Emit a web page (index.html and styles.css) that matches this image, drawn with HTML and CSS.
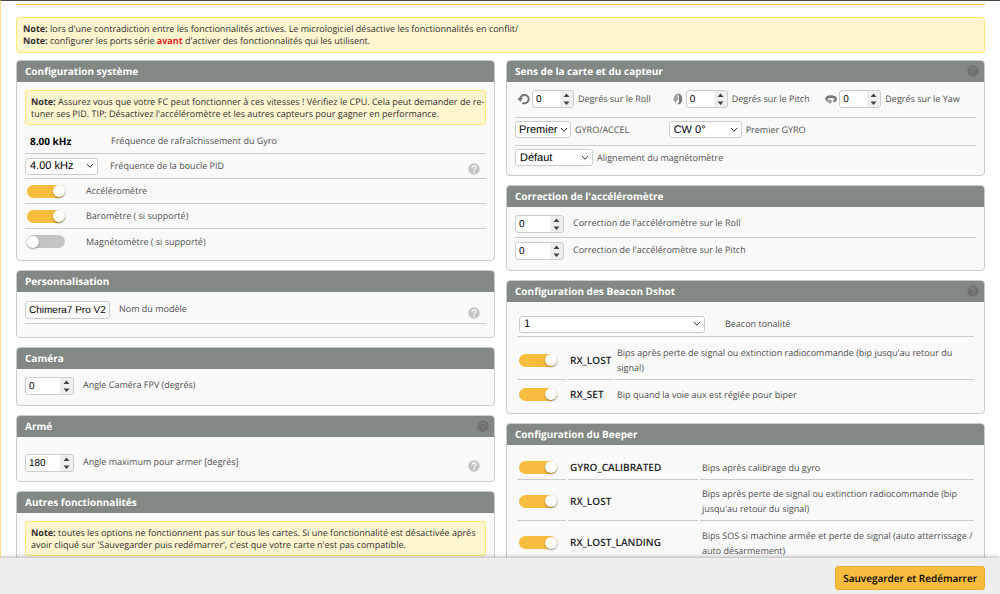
FILE: index.html
```html
<!DOCTYPE html>
<html lang="fr">
<head>
<meta charset="utf-8">
<title>Configuration</title>
<link rel="stylesheet" href="styles.css">
</head>
<body>
<svg class="defs" width="0" height="0" aria-hidden="true">
  <symbol id="help" viewBox="0 0 12 12">
    <circle class="disc" cx="6" cy="6" r="5.7"/>
    <path class="hook" d="M4.100 4.700C4.200 3.500 5 2.900 6 2.900c1.100 0 1.900.6 1.900 1.600 0 1.300-1.800 1.400-1.800 2.700" fill="none" stroke-width="1.3"/>
    <circle class="dot" cx="6.100" cy="8.900" r=".85"/>
  </symbol>
</svg>
<main class="content">
  <div class="rule"></div>
  <div class="note note-top">
    <p><strong>Note:</strong> lors d'une contradiction entre les fonctionnalités actives. Le micrologiciel désactive les fonctionnalités en conflit/</p>
    <p><strong>Note:</strong> configurer les ports série <strong class="alert">avant</strong> d'activer des fonctionnalités qui les utilisent.</p>
  </div>
  <div class="columns">
    <div class="column">
      <section class="box">
        <h2>Configuration système</h2>
        <div class="body">
          <div class="note">
            <p class="lines"><strong>Note:</strong> Assurez vous que votre FC peut fonctionner à ces vitesses ! Vérifiez le CPU. Cela peut demander de re-<br>tuner ses PID. TIP: Désactivez l'accéléromètre et les autres capteurs pour gagner en performance.</p>
          </div>
          <div class="row tall"><output class="freq" id="gyro">8.00 kHz</output><label for="gyro">Fréquence de rafraîchissement du Gyro</label></div>
          <div class="row"><select id="pid" class="w-pid"><option>4.00 kHz</option></select><label for="pid">Fréquence de la boucle PID</label><svg class="help"><use href="#help"/></svg></div>
          <div class="row"><input type="checkbox" class="toggle" id="acc" checked><label for="acc">Accéléromètre</label></div>
          <div class="row"><input type="checkbox" class="toggle" id="baro" checked><label for="baro">Baromètre ( si supporté)</label></div>
          <div class="row last"><input type="checkbox" class="toggle" id="mag"><label for="mag">Magnétomètre ( si supporté)</label></div>
        </div>
      </section>
      <section class="box">
        <h2>Personnalisation</h2>
        <div class="body roomy">
          <div class="row name-row"><input type="text" id="name" class="w-name" value="Chimera7 Pro V2"><label for="name">Nom du modèle</label><svg class="help"><use href="#help"/></svg></div>
        </div>
      </section>
      <section class="box">
        <h2>Caméra</h2>
        <div class="body">
          <div class="row num last"><input type="number" id="cam" value="0"><label for="cam">Angle Caméra FPV (degrés)</label></div>
        </div>
      </section>
      <section class="box">
        <h2>Armé<svg class="help"><use href="#help"/></svg></h2>
        <div class="body arm">
          <div class="row num last"><input type="number" id="arm" value="180"><label for="arm">Angle maximum pour armer [degrés]</label><svg class="help"><use href="#help"/></svg></div>
        </div>
      </section>
      <section class="box">
        <h2>Autres fonctionnalités</h2>
        <div class="body">
          <div class="note">
            <p><strong>Note:</strong> toutes les options ne fonctionnent pas sur tous les cartes. Si une fonctionnalité est désactivée aprés avoir cliqué sur 'Sauvegarder puis redémarrer', c'est que votre carte n'est pas compatible.</p>
          </div>
        </div>
      </section>
    </div>
    <div class="column">
      <section class="box">
        <h2>Sens de la carte et du capteur<svg class="help"><use href="#help"/></svg></h2>
        <div class="body">
          <div class="row thirds">
            <div class="field">
              <svg class="axis" viewBox="0 0 14 14"><path d="M3.300 6.500A4.200 4.200 0 1 1 5.500 10.800" fill="none" stroke="#777" stroke-width="2"/><path d="M.4 6H6L3.200 10z" fill="#777"/></svg>
              <input type="number" id="roll" value="0"><label for="roll">Degrés sur le Roll</label>
            </div>
            <div class="field">
              <svg class="axis" viewBox="0 0 14 14"><path d="M6 1.800C9.200 1 11.200 3.500 11.200 7S9.200 13 6 12.200L8 10.500V3.500z" fill="#777"/><path d="M6.800 1.800C4 2 2.600 4.600 2.600 7H1.800l2.600 4L7.400 7z" fill="#a5a5a5"/></svg>
              <input type="number" id="pitch" value="0"><label for="pitch">Degrés sur le Pitch</label>
            </div>
            <div class="field">
              <svg class="axis" viewBox="0 0 14 14"><path d="M1.200 7C1 4.400 4 3.200 7 3.200s6 1.200 6 3.800c0 1.800-1.500 3-3.600 3.400V8.100c.8-.2 1.100-.5 1.100-.8 0-.8-1.700-1.200-3.500-1.200s-3.300.4-3.300 1.100z" fill="#777"/><path d="M1.200 7c0 1.700 1.500 3 4 3.500V12L8.400 9.400 5.200 7v1.200C4.300 8 3.700 7.600 3.700 7z" fill="#999"/></svg>
              <input type="number" id="yaw" value="0"><label for="yaw">Degrés sur le Yaw</label>
            </div>
          </div>
          <div class="row thirds short">
            <div class="field"><select id="gyroaccel" class="w-first"><option>Premier</option></select><label for="gyroaccel">GYRO/ACCEL</label></div>
            <div class="field"><select id="firstgyro" class="w-cw"><option>CW 0°</option></select><label for="firstgyro">Premier GYRO</label></div>
          </div>
          <div class="row thirds last">
            <div class="field"><select id="magalign" class="w-def"><option>Défaut</option></select><label for="magalign">Alignement du magnétomètre</label></div>
          </div>
        </div>
      </section>
      <section class="box">
        <h2>Correction de l'accéléromètre</h2>
        <div class="body">
          <div class="row num"><input type="number" id="troll" value="0"><label for="troll">Correction de l'accéléromètre sur le Roll</label></div>
          <div class="row num last below"><input type="number" id="tpitch" value="0"><label for="tpitch">Correction de l'accéléromètre sur le Pitch</label></div>
        </div>
      </section>
      <section class="box">
        <h2>Configuration des Beacon Dshot<svg class="help"><use href="#help"/></svg></h2>
        <div class="body">
          <div class="tone"><select id="tone" class="w-tone"><option>1</option></select><label for="tone">Beacon tonalité</label></div>
          <table class="beacon">
            <tr class="double"><td class="sw"><input type="checkbox" class="toggle" id="b1" checked></td><th scope="row"><label for="b1">RX_LOST</label></th><td>Bips après perte de signal ou extinction radiocommande (bip jusqu'au retour du signal)</td></tr>
            <tr class="end"><td class="sw"><input type="checkbox" class="toggle" id="b2" checked></td><th scope="row"><label for="b2">RX_SET</label></th><td>Bip quand la voie aux est réglée pour biper</td></tr>
          </table>
        </div>
      </section>
      <section class="box">
        <h2>Configuration du Beeper</h2>
        <div class="body">
          <table class="beeper">
            <tr><td class="sw"><input type="checkbox" class="toggle" id="p1" checked></td><th scope="row"><label for="p1">GYRO_CALIBRATED</label></th><td>Bips après calibrage du gyro</td></tr>
            <tr class="double"><td class="sw"><input type="checkbox" class="toggle" id="p2" checked></td><th scope="row"><label for="p2">RX_LOST</label></th><td>Bips après perte de signal ou extinction radiocommande (bip jusqu'au retour du signal)</td></tr>
            <tr class="double end"><td class="sw"><input type="checkbox" class="toggle" id="p3" checked></td><th scope="row"><label for="p3">RX_LOST_LANDING</label></th><td>Bips SOS si machine armée et perte de signal (auto atterrissage / auto désarmement)</td></tr>
          </table>
        </div>
      </section>
    </div>
  </div>
</main>
<footer class="toolbar"><button type="button">Sauvegarder et Redémarrer</button></footer>
</body>
</html>
```
FILE: styles.css
```css
* { box-sizing: border-box; }

body {
  margin: 0;
  height: 100vh;
  display: flex;
  flex-direction: column;
  font: 9px/12px "Open Sans", sans-serif;
  text-rendering: geometricPrecision;
  color: #4f4f4f;
  background: #fff;
}

.defs { display: none; }

.content {
  flex: 1;
  min-height: 0;
  overflow-y: auto;
  scrollbar-width: none;
  border-top: 1px solid #4d4848;
  border-left: 1px solid #ffdd94;
  padding: 3px 15px 0;
}

.rule { height: 1px; background: #ffbb2a; }

p { margin: 0; }

.note {
  background: #fff5cf;
  border: 1px solid #ffe67a;
  border-radius: 3px;
  padding: 5px 0 4px 5px;
  color: #303030;
}
.note-top { margin: 12px 0 7px; padding: 5px 6px; }
.lines { white-space: nowrap; }
.alert { color: #e2231a; }

.columns {
  display: grid;
  grid-template-columns: 1fr 1fr;
  gap: 11px;
}
.column {
  display: flex;
  flex-direction: column;
  gap: 9px;
}

.box {
  background: #f9f9f9;
  border: 1px solid #ccc;
  border-radius: 4px;
  overflow: hidden;
}
.box h2 {
  margin: 0;
  height: 21px;
  padding: 0 5px 1px 8px;
  display: flex;
  align-items: center;
  justify-content: space-between;
  background: #828883;
  color: #fff;
  font-size: 10px;
  font-weight: 700;
}
.body { padding: 8px 8px 5px; }
.roomy { padding: 9px 8px 13px; }
.arm { padding: 17px 8px 4px; }

.row {
  display: flex;
  align-items: center;
  height: 25px;
  border-bottom: 1px solid #ccc;
}
.row.tall { height: 29px; padding-top: 3px; }
.name-row, .row.num { height: 23px; align-items: flex-start; }
.last { border-bottom: 0; }
.below { margin-top: 4px; }
.num label, .name-row label { line-height: 16px; margin-left: 9px; }

.freq { width: 86px; padding-left: 5px; font-size: 10px; font-weight: 700; color: #000; }
.w-pid + label { margin-left: 12px; }

.help { flex: none; width: 12px; height: 12px; }
.disc { fill: #c4c4c4; }
.hook { stroke: #fff; }
.dot { fill: #fff; }
.row .help { margin: 6px 6px 0 auto; }
h2 .help { filter: brightness(0.5); opacity: 0.6; }

input[type="text"], input[type="number"], select {
  appearance: none;
  margin: 0;
  border: 1px solid #ccc;
  border-radius: 3px;
  background-color: #fff;
  color: #000;
  font: 10px/14px "Liberation Sans", Arial, sans-serif;
  text-rendering: geometricPrecision;
}
input[type="text"], input[type="number"] { height: 18px; padding: 0 3px; }
input[type="number"] {
  width: 49px;
  background-image: url("data:image/svg+xml,%3Csvg xmlns='http://www.w3.org/2000/svg' width='13' height='16'%3E%3Cpath fill='%23efefef' d='M0 0h13v16H0z'/%3E%3Cpath fill='%23444' d='M3.500 6 6.500 2.500 9.500 6zM3.500 10.500 6.500 14 9.500 10.500z'/%3E%3C/svg%3E");
  background-repeat: no-repeat;
  background-position: right center;
  -moz-appearance: textfield;
}
input[type="number"]::-webkit-inner-spin-button { appearance: none; margin: 0; }

select {
  height: 17px;
  padding: 0 14px 0 4px;
  font-size: 11px;
  background-image: url("data:image/svg+xml,%3Csvg xmlns='http://www.w3.org/2000/svg' width='8' height='6'%3E%3Cpath fill='none' stroke='%23333' d='M1 1 4 4.300 7 1'/%3E%3C/svg%3E");
  background-repeat: no-repeat;
  background-position: right 3px center;
}
.w-pid { width: 73px; }
.w-name { width: 85px; }
.w-first { width: 56px; padding-left: 3px; padding-right: 10px; background-position: right 2px center; }
.w-cw { width: 73px; }
.w-def { width: 78px; }
.w-tone { width: 186px; }

.toggle {
  appearance: none;
  flex: none;
  width: 38px;
  height: 13px;
  margin: 0;
  border-radius: 7px;
  background: #c4c4c4;
  display: flex;
  align-items: center;
}
.toggle::before {
  content: "";
  width: 12px;
  height: 12px;
  border-radius: 50%;
  background: #fff;
  box-shadow: 0 1px 2px rgba(0, 0, 0, 0.4);
}
.toggle:checked { background: #f6bc3d; justify-content: flex-end; }
.row .toggle { margin: 0 21px 0 2px; }

.thirds {
  display: grid;
  grid-template-columns: 1fr 1fr 1fr;
  height: 28px;
  align-items: start;
}
.thirds.short { padding-top: 3px; }
.thirds.last { height: 24px; padding-top: 3px; }
.field { display: flex; align-items: center; white-space: nowrap; }
.axis { flex: none; width: 14px; height: 14px; margin: 0 1px 0 2px; }
.field input[type="number"] { width: 42px; }
.field label { margin-left: 4px; }

.tone {
  display: flex;
  align-items: center;
  height: 21px;
  margin: 6px 2px 0;
  padding-left: 2px;
  padding-bottom: 4px;
  border-bottom: 1px solid #ccc;
}
.tone label { margin-left: 20px; }

table {
  width: 100%;
  table-layout: fixed;
  border-collapse: separate;
  border-spacing: 2px 0;
}
td, th {
  height: 27px;
  padding: 2px 0 0 2px;
  text-align: left;
  vertical-align: middle;
  border-bottom: 1px solid #ccc;
  line-height: 15px;
}
th { font-size: 10px; font-weight: 600; color: #222; width: 130px; }
.beacon th { width: 45px; }
.sw { width: 49px; }
.double td, .double th { height: 41px; }
.end td, .end th { border-bottom: 0; }
.beacon .double td, .beacon .double th { height: 43px; padding-top: 4px; }
.beacon .end td, .beacon .end th { height: 28px; padding-top: 0; }

.toolbar {
  position: relative;
  flex: none;
  height: 36px;
  padding: 0 15px;
  display: flex;
  align-items: center;
  justify-content: flex-end;
  background: #eee;
  box-shadow: 0 -1px 4px rgba(0, 0, 0, 0.3);
}
.toolbar button {
  height: 24px;
  margin-top: 4px;
  padding: 0 7px;
  border: 1px solid #e8ae30;
  border-radius: 3px;
  background: #f6bc3d;
  color: #000;
  font: 600 10px/14px "Open Sans", sans-serif;
  text-rendering: geometricPrecision;
}

.row.last:not(.num):not(.thirds) { height: 26px; padding-bottom: 1px; }
```
